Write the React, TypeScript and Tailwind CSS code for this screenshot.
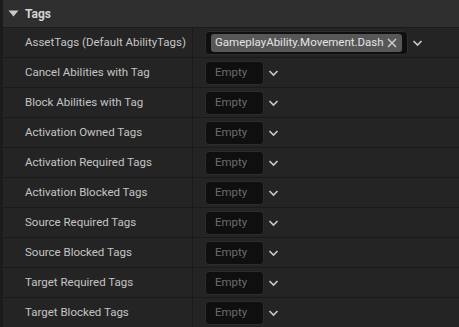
import React from "react";

const rows = [
  "Cancel Abilities with Tag",
  "Block Abilities with Tag",
  "Activation Owned Tags",
  "Activation Required Tags",
  "Activation Blocked Tags",
  "Source Required Tags",
  "Source Blocked Tags",
  "Target Required Tags",
  "Target Blocked Tags",
];

function Chevron() {
  return (
    <svg width="11" height="8" viewBox="0 0 11 8" className="ml-[4px]">
      <path d="M1.5 2 L5.5 6 L9.5 2" fill="none" stroke="#c8c8c8" strokeWidth="1.7" />
    </svg>
  );
}

function Row({ label, children }: { label: string; children: React.ReactNode }) {
  return (
    <div className="flex h-[30px] border-t border-[#1a1a1a]">
      <div className="w-[190px] flex items-center pl-[22px] text-[11.5px] text-[#c4c4c4] border-r border-[#1a1a1a]">
        {label}
      </div>
      <div className="flex-1 flex items-center pl-[12px]">{children}</div>
    </div>
  );
}

export default function App() {
  return (
    <div
      className="w-[459px] h-[327px] bg-[#242424] border-l-[3px] border-[#1b1b1b] overflow-hidden"
      style={{ fontFamily: "Roboto, 'Open Sans', sans-serif" }}
    >
      <div className="h-[27px] bg-[#2f2f2f] flex items-center pl-[5px]">
        <svg width="11" height="7" viewBox="0 0 11 7">
          <path d="M0.5 0.5 L10.5 0.5 L5.5 6.5 Z" fill="#c8c8c8" />
        </svg>
        <span className="ml-[6px] text-[12px] font-bold text-[#d4d4d4]">Tags</span>
      </div>
      <Row label="AssetTags (Default AbilityTags)">
        <div className="h-[24px] w-[203px] rounded-[4px] bg-[#0f0f0f] border border-[#2c2c2c] flex items-center px-[5px]">
          <div className="h-[18px] flex-1 rounded-[3px] bg-[#575757] flex items-center pl-[4px] pr-[5px] text-[11.5px] text-[#e4e4e4]">
            <span className="flex-1 whitespace-nowrap">GameplayAbility.Movement.Dash</span>
            <svg width="10" height="10" viewBox="0 0 10 10" className="shrink-0">
              <path d="M1 1 L9 9 M9 1 L1 9" stroke="#d0d0d0" strokeWidth="1.4" />
            </svg>
          </div>
        </div>
        <Chevron />
      </Row>
      {rows.map((r) => (
        <Row key={r} label={r}>
          <div className="h-[24px] w-[59px] rounded-[4px] bg-[#0f0f0f] border border-[#2c2c2c] flex items-center pl-[9px] text-[11.5px] text-[#6c6c6c]">
            Empty
          </div>
          <Chevron />
        </Row>
      ))}
    </div>
  );
}
